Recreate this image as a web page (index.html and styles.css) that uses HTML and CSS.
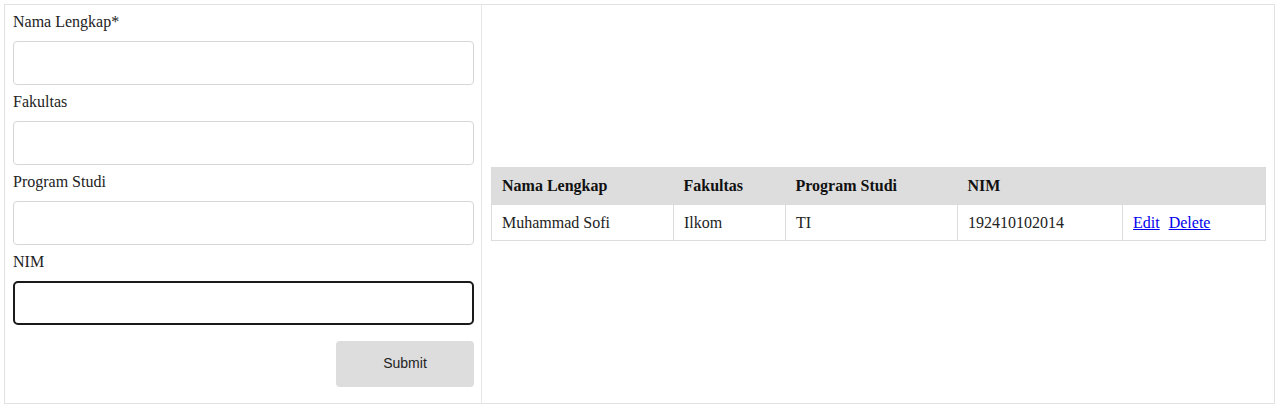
FILE: index.html
```html
<!DOCTYPE html>
<html>
<head>
<meta charset="utf-8">
<link rel="stylesheet" href="styles.css">
</head>
<body>
<div class="app">
  <form class="form-col">
    <div class="field">
      <label class="label">Nama Lengkap*</label>
      <input class="input" type="text">
    </div>
    <div class="field">
      <label class="label">Fakultas</label>
      <input class="input" type="text">
    </div>
    <div class="field">
      <label class="label">Program Studi</label>
      <input class="input" type="text">
    </div>
    <div class="field">
      <label class="label">NIM</label>
      <input class="input input-focus" type="text">
    </div>
    <div class="actions">
      <button class="submit" type="button">Submit</button>
    </div>
  </form>
  <div class="table-col">
    <table class="table">
      <colgroup>
        <col class="c1"><col class="c2"><col class="c3"><col class="c4"><col class="c5">
      </colgroup>
      <thead>
        <tr>
          <th>Nama Lengkap</th>
          <th>Fakultas</th>
          <th>Program Studi</th>
          <th>NIM</th>
          <th></th>
        </tr>
      </thead>
      <tbody>
        <tr>
          <td>Muhammad Sofi</td>
          <td>Ilkom</td>
          <td>TI</td>
          <td>192410102014</td>
          <td><a href="#" class="link link-edit">Edit</a><a href="#" class="link">Delete</a></td>
        </tr>
      </tbody>
    </table>
  </div>
</div>
</body>
</html>
```
FILE: styles.css
```css
html, body {
  margin: 0;
  padding: 0;
  background: #fff;
}
body {
  font-family: "Liberation Serif", "Times New Roman", serif;
  font-size: 16px;
  color: #222;
}
.app {
  box-sizing: border-box;
  margin: 4px;
  width: 1271px;
  height: 400px;
  border: 1px solid #e2e2e2;
  display: flex;
}
.form-col {
  box-sizing: border-box;
  width: 478px;
  border-right: 1px solid #e6e6e6;
  padding: 8px 7px 0 8px;
  margin: 0;
  display: flex;
  flex-direction: column;
}
.field {
  display: flex;
  flex-direction: column;
  margin-bottom: 8px;
}
.label {
  font-family: "Liberation Serif", "Times New Roman", serif;
  font-size: 16px;
  line-height: 18px;
  height: 18px;
  margin-bottom: 10px;
  color: #222;
}
.input {
  box-sizing: border-box;
  height: 44px;
  width: 100%;
  border: 1px solid #d6d6d6;
  border-radius: 4px;
  padding: 0 10px;
  font-size: 16px;
  margin: 0;
  outline: none;
  background: #fff;
}
.input-focus {
  border: 2px solid #1a1a1a;
  border-radius: 5px;
}
.actions {
  display: flex;
  justify-content: flex-end;
  margin-top: 8px;
}
.submit {
  box-sizing: border-box;
  width: 138px;
  height: 46px;
  border: none;
  border-radius: 4px;
  background: #dddddd;
  font-family: "Liberation Sans", Arial, sans-serif;
  font-size: 14px;
  color: #222;
  margin: 0;
  padding: 0 0 2px 0;
}
.table-col {
  flex: 1;
  display: flex;
  align-items: center;
  padding: 0 8px 0 9px;
}
.table {
  width: 774px;
  border-collapse: collapse;
  table-layout: fixed;
  border: 1px solid #dcdcdc;
  font-family: "Liberation Serif", "Times New Roman", serif;
  font-size: 16px;
}
.c1 { width: 182px; }
.c2 { width: 112px; }
.c3 { width: 172px; }
.c4 { width: 165px; }
.c5 { width: 143px; }
.table th {
  background: #dddddd;
  text-align: left;
  font-weight: bold;
  height: 37px;
  padding: 0 10px;
  box-sizing: border-box;
  color: #111;
}
.table td {
  height: 36px;
  padding: 0 10px;
  border: 1px solid #dcdcdc;
  box-sizing: border-box;
  color: #222;
}
.link {
  color: #0000ee;
  text-decoration: underline;
}
.link-edit {
  margin-right: 9px;
}
```
